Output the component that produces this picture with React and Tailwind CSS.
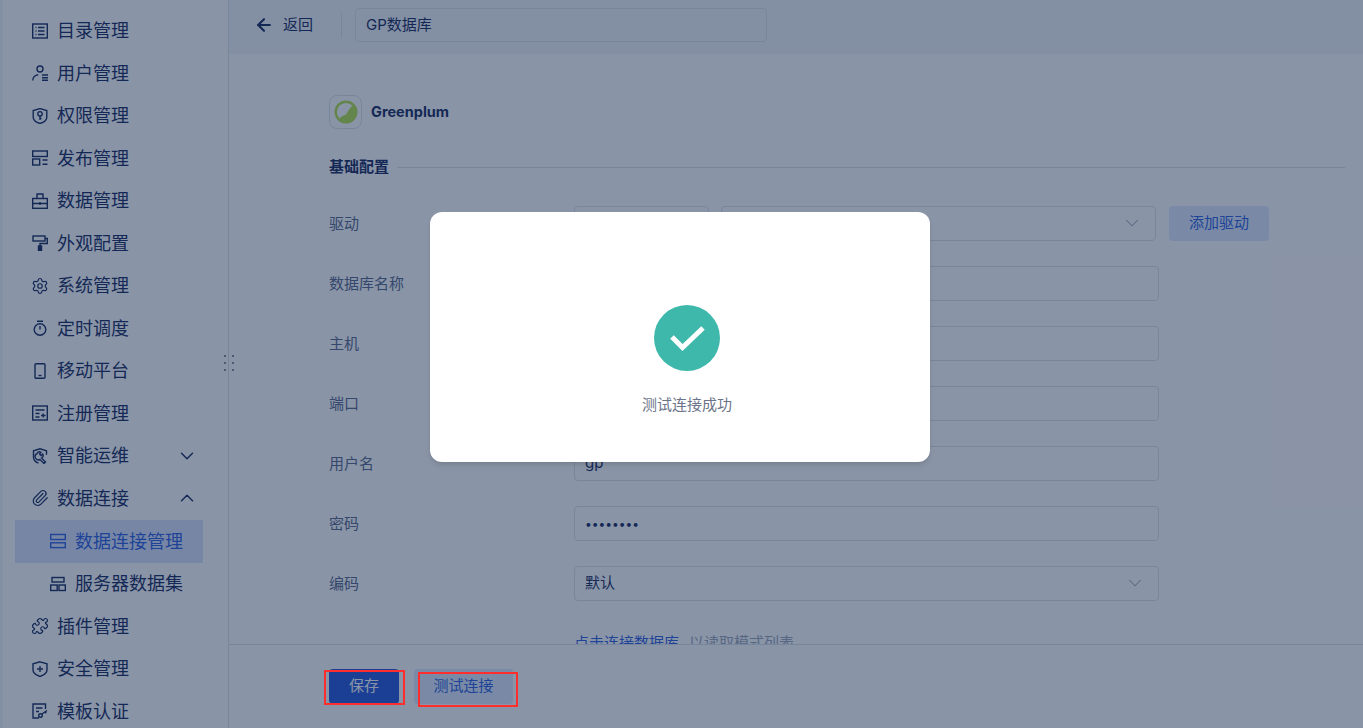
import { ArrowLeft, ChevronDown, ChevronUp, Paperclip, Puzzle, Settings } from "lucide-react";

function Ico({ children, className = "" }) {
  return (
    <svg
      viewBox="0 0 16 16"
      fill="none"
      stroke="currentColor"
      strokeWidth="1.4"
      className={"w-4 h-4 shrink-0 " + className}
    >
      {children}
    </svg>
  );
}

const icons = {
  list: (
    <Ico>
      <rect x="0.7" y="1" width="14.6" height="14" />
      <path d="M3.500 4.500h1M6 4.500h6.500M3.500 8h1M6 8h6.500M3.500 11.500h1M6 11.500h6.500" />
    </Ico>
  ),
  user: (
    <Ico>
      <circle cx="8" cy="4" r="3" />
      <path d="M0.800 15.500c0-3 2.200-5.500 5.400-5.800M10 10h6M10 12.700h6M10 15.300h6" />
    </Ico>
  ),
  shield: (
    <Ico>
      <path d="M8 .6l6.800 2v6.600c0 3-3.300 5.300-6.800 6.300-3.500-1-6.800-3.300-6.800-6.300V2.600z" />
      <circle cx="8" cy="5.800" r="2.200" />
      <path d="M8 8v4M8 10.500h1.500" />
    </Ico>
  ),
  publish: (
    <Ico>
      <rect x="0.700" y="1" width="14.600" height="5.500" />
      <rect x="0.700" y="9" width="7" height="6" />
      <path d="M10.500 10h5M10.500 14.300h5" />
    </Ico>
  ),
  data: (
    <Ico>
      <rect x="0.700" y="5.500" width="14.600" height="9.800" />
      <path d="M5 5.500V1h6v4.500M0.700 10.500h14.600M8 9v3" />
    </Ico>
  ),
  roller: (
    <Ico>
      <rect x="1" y="1" width="12" height="5" />
      <path d="M13 3.500h2.300v5H8v2.500" />
      <rect x="6.500" y="11" width="3" height="4.500" fill="currentColor" />
    </Ico>
  ),
  timer: (
    <Ico>
      <circle cx="8" cy="9.500" r="5.800" />
      <path d="M5 1.200h6M8 6v3.500" />
    </Ico>
  ),
  mobile: (
    <Ico>
      <rect x="3" y="0.800" width="10" height="14.400" rx="1" />
      <path d="M6.500 12.500h3" />
    </Ico>
  ),
  form: (
    <Ico>
      <rect x="0.700" y="1" width="14.600" height="14" />
      <path d="M3.500 5h9M3.500 8.500h4M3.500 12h4M9 10.500h4.500M11.200 8.500v4" />
    </Ico>
  ),
  ops: (
    <Ico>
      <path d="M14.500 6.800V2.800L8 .8 1.500 2.800v6.400c0 3 2.500 5 5 6" />
      <path d="M5 5.500a3 3 0 0 1 4-1.200L7.500 6l1.500 1.500 1.700-1.500a3 3 0 0 1-1.200 4l4 4-1.500 1.500-4-4a3 3 0 0 1-3-6z" />
    </Ico>
  ),
  server: (
    <Ico>
      <rect x="0.700" y="1.500" width="14.600" height="5" />
      <rect x="0.700" y="9.800" width="14.600" height="4.800" />
    </Ico>
  ),
  servers: (
    <Ico>
      <rect x="2" y="1.500" width="12" height="4.500" />
      <rect x="0.700" y="9" width="6.500" height="5.500" />
      <rect x="9" y="9" width="6.300" height="5.500" />
    </Ico>
  ),
  shieldPlus: (
    <Ico>
      <path d="M8 .8l7 2v6c0 3-3.300 5.500-7 6.700-3.700-1.200-7-3.700-7-6.700v-6z" />
      <path d="M5 8h6M8 5v6" />
    </Ico>
  ),
  cert: (
    <Ico>
      <path d="M7 15H1V1h12.500v5M4 5h6.500M4 8.500h3" />
      <circle cx="8.500" cy="12.500" r="1.800" />
      <path d="M10 11l5-3.500M13 8.800l1.200 1.400" />
    </Ico>
  ),
};

const navTop = [
  ["list", "目录管理"],
  ["user", "用户管理"],
  ["shield", "权限管理"],
  ["publish", "发布管理"],
  ["data", "数据管理"],
  ["roller", "外观配置"],
  ["gear", "系统管理"],
  ["timer", "定时调度"],
  ["mobile", "移动平台"],
  ["form", "注册管理"],
];

function NavIcon({ name }) {
  if (name === "gear") return <Settings size={18} strokeWidth={1.6} className="shrink-0 -mx-[1px]" />;
  if (name === "clip") return <Paperclip size={18} strokeWidth={1.6} className="shrink-0 -mx-[1px]" />;
  if (name === "puzzle") return <Puzzle size={18} strokeWidth={1.6} className="shrink-0 -mx-[1px]" />;
  return icons[name];
}

function NavItem({ icon, label, chevron }) {
  return (
    <div className="h-[42.5px] pl-[29px] pr-[30px] flex items-center text-[#14275d]">
      <NavIcon name={icon} />
      <span className="ml-[9px] flex-1 text-[18px] whitespace-nowrap">{label}</span>
      {chevron === "down" && <ChevronDown size={22} strokeWidth={1.6} />}
      {chevron === "up" && <ChevronUp size={22} strokeWidth={1.6} />}
    </div>
  );
}

function Sidebar() {
  return (
    <aside className="relative w-[229px] shrink-0 h-full border-l-[3px] border-l-[#f3f5f8] border-r border-r-[#dde2ea] bg-white pt-[9.6px] overflow-hidden">
      {navTop.map(([icon, label]) => (
        <NavItem key={label} icon={icon} label={label} />
      ))}
      <NavItem icon="ops" label="智能运维" chevron="down" />
      <NavItem icon="clip" label="数据连接" chevron="up" />
      <div className="ml-[12px] w-[188px] h-[43px] pl-[35px] flex items-center bg-[#dce3ff] text-[#2a5ce0]">
        {icons.server}
        <span className="ml-[9px] text-[18px] whitespace-nowrap">数据连接管理</span>
      </div>
      <div className="ml-[12px] w-[188px] h-[42.5px] pl-[35px] flex items-center text-[#14275d]">
        {icons.servers}
        <span className="ml-[9px] text-[18px] whitespace-nowrap">服务器数据集</span>
      </div>
      <NavItem icon="puzzle" label="插件管理" />
      <NavItem icon="shieldPlus" label="安全管理" />
      <NavItem icon="cert" label="模板认证" />
    </aside>
  );
}

function Field({ label, children }) {
  return (
    <div className="flex items-center h-[34px] mb-[26px]">
      <div className="w-[245px] shrink-0 pt-[2px] text-[15px] text-[#56658a]">{label}</div>
      {children}
    </div>
  );
}

function TextBox({ value, select, className = "w-[585px]" }) {
  return (
    <div className={"h-[35px] pl-[10px] pr-[12px] flex items-center justify-between border border-[#dde2ea] rounded-[4px] text-[15px] text-[#14275d] " + className}>
      <span className="whitespace-nowrap">{value}</span>
      {select && <ChevronDown size={22} strokeWidth={1.1} className="text-[#9aa5b8]" />}
    </div>
  );
}

export default function App() {
  return (
    <div
      className="relative flex w-full h-screen overflow-hidden bg-white"
      style={{ fontFamily: 'Inter, "Noto Sans CJK SC", sans-serif' }}
    >
      <Sidebar />

      <div className="flex-1 min-w-0 h-full flex flex-col">
        <header className="h-[54px] shrink-0 bg-[#f3f5f8] flex items-center pl-[25px] pb-[4px]">
          <ArrowLeft size={20} strokeWidth={2.6} className="text-[#14275d]" />
          <span className="ml-[9px] text-[15px] text-[#14275d]">返回</span>
          <div className="ml-[28px] h-[25px] w-px bg-[#dde2ea]" />
          <div className="ml-[13px] w-[412px] h-[34px] px-[10px] flex items-center border border-[#dde2ea] rounded-[4px] text-[15px] text-[#14275d]">
            GP数据库
          </div>
        </header>

        <div className="flex-1 min-h-0 overflow-hidden pl-[100px] pr-[18px] pt-[41px]">
          <div className="flex items-center gap-[9px] h-[34px]">
            <div className="w-[33px] h-[34px] rounded-[8px] border border-[#dde2ea] flex items-center justify-center">
              <svg viewBox="0 0 24 24" className="w-[24px] h-[24px]">
                <circle cx="12" cy="12" r="10.300" fill="none" stroke="#b4e04a" strokeWidth="2.400" />
                <path d="M19.500 4.500A10.600 10.600 0 0 1 4.500 19.500z" fill="#b4e04a" />
                <path d="M7.500 16.500C7.500 11 11.500 8.500 16 8l-4 6.500z" fill="#ffffff" />
              </svg>
            </div>
            <span className="text-[14.5px] font-bold text-[#14275d]">Greenplum</span>
          </div>

          <div className="flex items-center mt-[27px] h-[22px] mb-[28px]">
            <span className="text-[15px] font-bold text-[#14275d]">基础配置</span>
            <div className="ml-[8px] flex-1 h-px bg-[#dde2ea]" />
          </div>

          <Field label="驱动">
            <TextBox value="平台内置" select className="w-[135px]" />
            <TextBox value="Greenplum(greenplum)" select className="ml-[12px] w-[435px]" />
            <div className="ml-[13px] w-[100px] h-[35px] rounded-[4px] bg-[#e0ebff] flex items-center justify-center text-[15px] text-[#2a5ce0]">
              添加驱动
            </div>
          </Field>
          <Field label="数据库名称"><TextBox value="" /></Field>
          <Field label="主机"><TextBox value="" /></Field>
          <Field label="端口"><TextBox value="" /></Field>
          <Field label="用户名"><TextBox value="gp" /></Field>
          <Field label="密码"><TextBox value={<span className="text-[12px]">••••••••</span>} /></Field>
          <Field label="编码"><TextBox value="默认" select /></Field>
          <div className="pl-[245px] pt-[6px] text-[15px] whitespace-nowrap">
            <span className="text-[#2a5ce0]">点击连接数据库</span>
            <span className="ml-[10px] text-[#9aa5b8]">以读取模式列表</span>
          </div>
        </div>

        <footer className="h-[84px] shrink-0 bg-white border-t border-[#dde2ea] pl-[100px] pt-[24px] flex items-start gap-[15px]">
          <div className="w-[70px] h-[35px] rounded-[4px] bg-[#2255db] text-white text-[15px] flex items-center justify-center">
            保存
          </div>
          <div className="w-[99px] h-[35px] rounded-[4px] bg-[#e0ebff] text-[#2a5ce0] text-[15px] flex items-center justify-center">
            测试连接
          </div>
        </footer>
      </div>

      <div className="absolute inset-0 bg-[#14294d]/50" />

      <div className="absolute left-[430px] top-[212px] w-[500px] h-[250px] rounded-[12px] bg-white flex flex-col items-center pl-[14px] pt-[93px] shadow-md">
        <div className="w-[66px] h-[66px] rounded-full bg-[#3eb8ab] flex items-center justify-center">
          <svg viewBox="0 0 36 36" className="w-[36px] h-[36px]">
            <path d="M3 17l10.500 10.500L34 8" fill="none" stroke="white" strokeWidth="5" />
          </svg>
        </div>
        <div className="mt-[23px] text-[15px] text-[#6b7488]">测试连接成功</div>
      </div>

      <div className="absolute left-[224px] top-[355px] grid grid-cols-2 gap-x-[6px] gap-y-[5px]">
        {[0, 1, 2, 3, 4, 5].map((i) => (
          <div key={i} className="w-[2px] h-[2px] bg-[#4c5a75]" />
        ))}
      </div>

      <div className="absolute left-[324px] top-[670px] w-[81px] h-[35px] border-2 border-[#ff2d2d]" />
      <div className="absolute left-[418px] top-[672px] w-[100px] h-[35px] border-2 border-[#ff2d2d]" />
    </div>
  );
}
